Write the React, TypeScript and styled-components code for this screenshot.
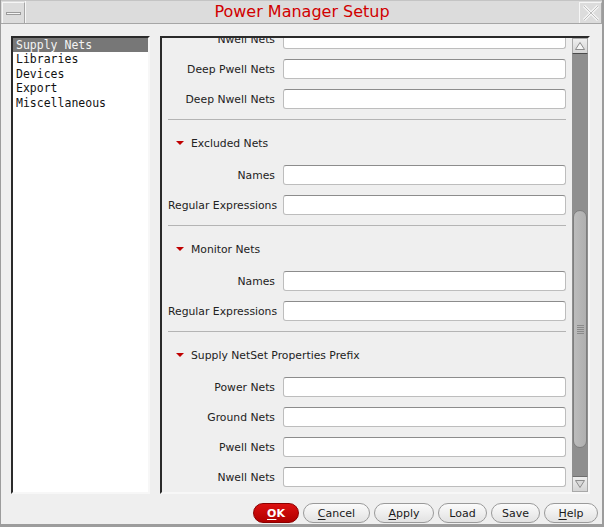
import React from 'react';
import styled, { createGlobalStyle } from 'styled-components';

const GlobalStyle = createGlobalStyle`
  html, body { margin: 0; padding: 0; background: #efefef; }
  body { font-family: "DejaVu Sans", "Liberation Sans", sans-serif; }
  * { box-sizing: border-box; }
`;

const Window = styled.div`
  width: 604px;
  height: 527px;
  display: flex;
  flex-direction: column;
  background: #efefef;
  border-left: 1px solid #9c9c9c;
  border-right: 2px solid #9c9c9c;
  border-bottom: 3px solid #9c9c9c;
  overflow: hidden;
`;

const TitleBar = styled.div`
  height: 24px;
  display: flex;
  align-items: stretch;
  background: #dcdcdc;
  border-top: 1px solid #c4c4c4;
  border-bottom: 1px solid #a6a6a6;
  flex: none;
`;

const FrameButton = styled.div`
  width: 23px;
  flex: none;
  display: flex;
  align-items: center;
  justify-content: center;
  border-top: 1px solid #f6f6f6;
  border-left: 1px solid #f6f6f6;
  border-right: 1px solid #a6a6a6;
  margin: 1px 0 0 1px;
`;

const MinGlyph = styled.div`
  width: 15px;
  height: 3px;
  border: 1px solid #9a9a9a;
  background: #f4f4f4;
`;

const Title = styled.div`
  flex: 1;
  display: flex;
  align-items: center;
  justify-content: center;
  color: #d10000;
  font-size: 16px;
  border-left: 1px solid #f6f6f6;
  padding-bottom: 1px;
`;

const Main = styled.div`
  flex: none;
  display: flex;
  gap: 10px;
  padding: 12px 12px 0 10px;
  height: 470px;
`;

const List = styled.div`
  width: 139px;
  height: 458px;
  background: #ffffff;
  border-style: solid;
  border-width: 2px;
  border-color: #2a2a2a #f7f7f7 #f7f7f7 #2a2a2a;
  font-family: "DejaVu Sans Mono", "Liberation Mono", monospace;
  font-size: 11.5px;
`;

const ListItem = styled.div<{ $selected?: boolean }>`
  height: 14.4px;
  line-height: 14.4px;
  padding-left: 3px;
  color: ${(p) => (p.$selected ? '#f4f4f4' : '#111')};
  background: ${(p) => (p.$selected ? '#777777' : 'transparent')};
  white-space: nowrap;
`;

const Panel = styled.div`
  width: 430px;
  height: 458px;
  display: flex;
  border-style: solid;
  border-width: 2px;
  border-color: #2a2a2a #f7f7f7 #f7f7f7 #2a2a2a;
`;

const Viewport = styled.div`
  flex: 1;
  overflow: hidden;
`;

const Content = styled.div<{ $offset: number }>`
  margin-top: ${(p) => -p.$offset}px;
  padding: 0 6px;
`;

const Separator = styled.div`
  height: 1px;
  margin-top: 5px;
  background: #b4b4b4;
`;

const SectionHeader = styled.div`
  height: 40px;
  padding-top: 6px;
  display: flex;
  align-items: center;
  gap: 7px;
  padding-left: 8px;
  font-size: 10.8px;
  color: #222;
`;

const Caret = styled.span`
  width: 0;
  height: 0;
  border-left: 4px solid transparent;
  border-right: 4px solid transparent;
  border-top: 4px solid #c00000;
`;

const Row = styled.div`
  height: 30px;
  display: grid;
  grid-template-columns: 107px 1fr;
  column-gap: 8px;
  align-items: center;
`;

const Label = styled.div`
  text-align: right;
  font-size: 10.8px;
  color: #222;
  white-space: nowrap;
`;

const Field = styled.input`
  height: 20px;
  width: 100%;
  border: 1px solid #bdbdbd;
  border-top-color: #8c8c8c;
  border-radius: 3px;
  background: #fff;
  outline: none;
  padding: 0 4px;
  margin: 0;
  font-family: inherit;
`;

const ScrollBar = styled.div`
  width: 16px;
  flex: none;
  display: flex;
  flex-direction: column;
  background: #8f8f8f;
`;

const ArrowButton = styled.div<{ $down?: boolean }>`
  height: 16px;
  flex: none;
  display: flex;
  align-items: center;
  justify-content: center;
  background: linear-gradient(#eeeeee, #d4d4d4);
  border: 1px solid #a8a8a8;
  ${(p) => (p.$down ? 'border-top: 1px solid #6e6e6e;' : 'border-bottom: 1px solid #4a4a4a;')}
`;

const Track = styled.div`
  flex: 1;
  display: flex;
  flex-direction: column;
  padding: 0 1px;
`;

const Thumb = styled.div<{ $top: number; $height: number }>`
  margin-top: ${(p) => p.$top}px;
  height: ${(p) => p.$height}px;
  border: 1px solid #7e7e7e;
  border-radius: 7px;
  background: linear-gradient(90deg, #bcbcbc, #b0b0b0);
  display: flex;
  align-items: center;
  justify-content: center;
`;

const Grip = styled.div`
  width: 7px;
  height: 9px;
  background: repeating-linear-gradient(#8a8a8a 0 1px, transparent 1px 2px);
`;

const Footer = styled.div`
  flex: 1;
  display: flex;
  justify-content: flex-end;
  align-items: flex-start;
  gap: 4px;
  padding: 9px 4px 0 0;
`;

const Button = styled.button<{ $w: number; $primary?: boolean }>`
  width: ${(p) => p.$w}px;
  height: 20px;
  border-radius: 10px;
  border: 1px solid ${(p) => (p.$primary ? '#8a0000' : '#9a9a9a')};
  background: ${(p) =>
    p.$primary ? 'linear-gradient(#dc1010, #b00000)' : 'linear-gradient(#fbfbfb, #e2e2e2)'};
  color: ${(p) => (p.$primary ? '#ffffff' : '#1a1a1a')};
  font-family: "DejaVu Sans", sans-serif;
  font-size: 11px;
  font-weight: ${(p) => (p.$primary ? 700 : 400)};
  padding: 0;
  display: flex;
  align-items: center;
  justify-content: center;
  u { text-decoration: underline; text-underline-offset: 2px; }
`;

function CloseGlyph() {
  return (
    <svg width="20" height="20" viewBox="0 0 20 20">
      <path d="M3 3 L17 17 M17 3 L3 17" stroke="#f6f6f6" strokeWidth="3" />
      <path d="M3 3 L17 17 M17 3 L3 17" stroke="#bdbdbd" strokeWidth="1" />
    </svg>
  );
}

function Arrow({ down }: { down?: boolean }) {
  return (
    <svg width="10" height="8" viewBox="0 0 10 8">
      {down ? (
        <path d="M0.5 0.5 L9.5 0.5 L5 7.5 Z" fill="#d8d8d8" stroke="#8c8c8c" />
      ) : (
        <path d="M0.5 7.5 L9.5 7.5 L5 0.5 Z" fill="#f6f6f6" stroke="#8c8c8c" />
      )}
    </svg>
  );
}

const listItems = ['Supply Nets', 'Libraries', 'Devices', 'Export', 'Miscellaneous'];

const sections: { title: string; rows: string[] }[] = [
  {
    title: 'Supply Nets',
    rows: ['Power Nets', 'Ground Nets', 'Pwell Nets', 'Nwell Nets', 'Deep Pwell Nets', 'Deep Nwell Nets'],
  },
  { title: 'Excluded Nets', rows: ['Names', 'Regular Expressions'] },
  { title: 'Monitor Nets', rows: ['Names', 'Regular Expressions'] },
  {
    title: 'Supply NetSet Properties Prefix',
    rows: ['Power Nets', 'Ground Nets', 'Pwell Nets', 'Nwell Nets', 'Deep Pwell Nets', 'Deep Nwell Nets'],
  },
];

export default function App() {
  return (
    <>
      <GlobalStyle />
      <Window>
        <TitleBar>
          <FrameButton>
            <MinGlyph />
          </FrameButton>
          <Title>Power Manager Setup</Title>
          <FrameButton>
            <CloseGlyph />
          </FrameButton>
        </TitleBar>
        <Main>
          <List>
            {listItems.map((item, i) => (
              <ListItem key={item} $selected={i === 0}>
                {item}
              </ListItem>
            ))}
          </List>
          <Panel>
            <Viewport>
              <Content $offset={144}>
                {sections.map((s, si) => (
                  <React.Fragment key={s.title}>
                    {si > 0 && <Separator />}
                    <SectionHeader>
                      <Caret />
                      {s.title}
                    </SectionHeader>
                    {s.rows.map((r) => (
                      <Row key={r}>
                        <Label>{r}</Label>
                        <Field />
                      </Row>
                    ))}
                  </React.Fragment>
                ))}
              </Content>
            </Viewport>
            <ScrollBar>
              <ArrowButton>
                <Arrow />
              </ArrowButton>
              <Track>
                <Thumb $top={156} $height={238}>
                  <Grip />
                </Thumb>
              </Track>
              <ArrowButton $down>
                <Arrow down />
              </ArrowButton>
            </ScrollBar>
          </Panel>
        </Main>
        <Footer>
          <Button $w={46} $primary>
            <u>O</u>K
          </Button>
          <Button $w={67}>
            <u>C</u>ancel
          </Button>
          <Button $w={60}>
            <u>A</u>pply
          </Button>
          <Button $w={49}>Load</Button>
          <Button $w={49}>Save</Button>
          <Button $w={54}>
            <u>H</u>elp
          </Button>
        </Footer>
      </Window>
    </>
  );
}
